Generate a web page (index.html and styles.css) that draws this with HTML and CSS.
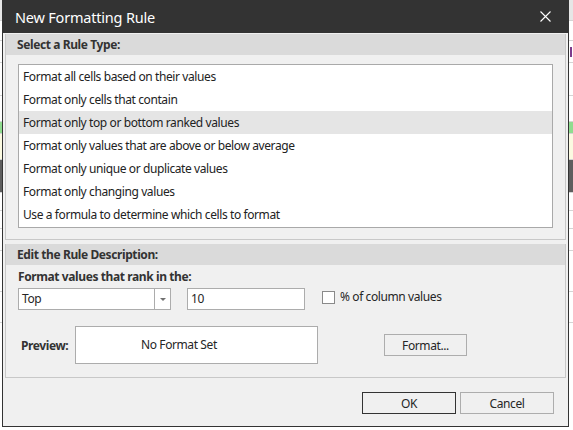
FILE: index.html
```html
<!DOCTYPE html>
<html lang="en">
<head>
    <meta charset="UTF-8">
    <title>New Formatting Rule</title>
    <link rel="stylesheet" href="styles.css">
</head>
<body>
<div class="desk">
    <div class="sheet">
        <div class="cell head" style="height:20px"></div>
        <div class="cell" style="height:19px"></div>
        <div class="cell" style="height:21px"></div>
        <div class="cell" style="height:32px"></div>
        <div class="cell" style="height:25px"></div>
        <div class="cell green" style="height:11px"></div>
        <div class="cell yellow" style="height:25px"></div>
        <div class="cell dark" style="height:32px"></div>
        <div class="cell" style="height:17px"></div>
        <div class="cell" style="height:17px"></div>
        <div class="cell" style="height:21px"></div>
        <div class="cell" style="height:40px"></div>
        <div class="cell" style="height:30px"></div>
    </div>

    <div class="dialog">
        <div class="titlebar">
            <span class="title">New Formatting Rule</span>
            <svg class="close" width="11" height="11" viewBox="0 0 11 11">
                <path d="M0.5 0.5 L10.5 10.5 M10.5 0.5 L0.5 10.5" stroke="#fff" stroke-width="1.1" fill="none"/>
            </svg>
        </div>

        <div class="section first">
            <div class="section-head">Select a Rule Type:</div>
            <div class="section-body">
                <ul class="listbox">
                    <li>Format all cells based on their values</li>
                    <li>Format only cells that contain</li>
                    <li class="sel">Format only top or bottom ranked values</li>
                    <li>Format only values that are above or below average</li>
                    <li>Format only unique or duplicate values</li>
                    <li>Format only changing values</li>
                    <li>Use a formula to determine which cells to format</li>
                </ul>
            </div>
        </div>

        <div class="section second">
            <div class="section-head">Edit the Rule Description:</div>
            <div class="section-body desc">
                <div class="rank-label">Format values that rank in the:</div>
                <div class="rank-row">
                    <div class="combo">
                        <span class="combo-text">Top</span>
                        <span class="combo-arrow"></span>
                    </div>
                    <div class="field">10</div>
                    <span class="check"></span>
                    <span class="check-label">% of column values</span>
                </div>
                <div class="preview-row">
                    <span class="preview-label">Preview:</span>
                    <div class="preview-box">No Format Set</div>
                    <button class="btn format-btn">Format...</button>
                </div>
            </div>
        </div>

        <div class="footer">
            <button class="btn default">OK</button>
            <button class="btn">Cancel</button>
        </div>
    </div>

    <div class="sheet right">
        <div class="cell head" style="height:20px"></div>
        <div class="cell" style="height:19px"></div>
        <div class="cell" style="height:21px"><span class="mark"></span></div>
        <div class="cell" style="height:32px"></div>
        <div class="cell" style="height:25px"></div>
        <div class="cell green" style="height:11px"></div>
        <div class="cell yellow" style="height:25px"></div>
        <div class="cell dark" style="height:32px"></div>
        <div class="cell" style="height:17px"></div>
        <div class="cell" style="height:17px"></div>
        <div class="cell" style="height:21px"></div>
        <div class="cell" style="height:40px"></div>
        <div class="cell" style="height:30px"></div>
    </div>
</div>
</body>
</html>
```

FILE: styles.css
```css
body {
    margin: 0;
    font-family: "Noto Sans", "Open Sans", sans-serif;
    font-size: 12px;
    letter-spacing: -0.4px;
    color: #262626;
    background: #fff;
}

.desk {
    display: flex;
    width: 573px;
    height: 430px;
    overflow: hidden;
}

/* spreadsheet peeking out behind the dialog */
.sheet {
    width: 2px;
    flex: none;
    display: flex;
    flex-direction: column;
    background: #fff;
}

.sheet.right {
    width: 4px;
}

.cell {
    flex: none;
    border-bottom: 1px solid #d4d4d4;
    background: #fff;
    position: relative;
}

.cell.head {
    background: #e6e6e6;
}

.cell.green {
    background: #8fdc8f;
}

.cell.yellow {
    background: #fbfae1;
}

.cell.dark {
    background: #5e5e5e;
}

.mark {
    position: absolute;
    left: 1px;
    top: 6px;
    width: 2px;
    height: 10px;
    background: #7d3c8c;
}

.dialog {
    width: 567px;
    height: 427px;
    flex: none;
    box-sizing: border-box;
    border: 1px solid #333;
    border-top: 0;
    background: #f0f0f0;
    display: flex;
    flex-direction: column;
}

.titlebar {
    height: 33px;
    flex: none;
    background: #333;
    color: #fff;
    display: flex;
    align-items: center;
    justify-content: space-between;
    padding: 0 17px 0 12px;
    font-size: 14.5px;
    letter-spacing: -0.2px;
}

.close {
    display: block;
}

.section {
    margin: 0 2px;
    border: 1px solid #c8c8c8;
    border-top: 0;
}

.section.first {
    margin-top: 1px;
}

.section.second {
    margin-top: 4px;
}

.section-head {
    height: 21px;
    line-height: 21px;
    background: #dadada;
    font-weight: bold;
    padding-left: 11px;
    color: #333;
}

.section-body {
    padding: 9px 12px 11px;
}

.listbox {
    list-style: none;
    margin: 0;
    padding: 0 0 1px;
    background: #fff;
    border: 1px solid #a9a9a9;
}

.listbox li {
    height: 23px;
    line-height: 23px;
    padding-left: 4px;
    color: #222;
}

.listbox li.sel {
    background: #e5e5e5;
}

.section-body.desc {
    padding: 0 12px 13px;
}

.rank-label {
    font-weight: bold;
    margin-top: 4px;
    line-height: 16px;
    color: #333;
}

.rank-row {
    display: flex;
    align-items: flex-start;
    margin-top: 3px;
    height: 22px;
}

.combo {
    width: 153px;
    height: 22px;
    box-sizing: border-box;
    border: 1px solid #acacac;
    background: #fff;
    display: flex;
}

.combo-text {
    flex: 1;
    line-height: 20px;
    padding-left: 3px;
}

.combo-arrow {
    width: 16px;
    box-sizing: border-box;
    border-left: 1px solid #acacac;
    display: flex;
    align-items: center;
    justify-content: center;
}

.combo-arrow::after {
    content: "";
    border-left: 3px solid transparent;
    border-right: 3px solid transparent;
    border-top: 3px solid #707070;
    margin-left: 1px;
}

.field {
    width: 118px;
    height: 22px;
    box-sizing: border-box;
    margin-left: 16px;
    border: 1px solid #acacac;
    background: #fff;
    line-height: 20px;
    padding-left: 3px;
}

.check {
    width: 13px;
    height: 13px;
    box-sizing: border-box;
    margin: 3px 0 0 17px;
    border: 1px solid #8a8a8a;
    background: #fff;
}

.check-label {
    margin-left: 5px;
    line-height: 18px;
}

.preview-row {
    display: flex;
    align-items: center;
    margin-top: 16px;
    height: 38px;
}

.preview-label {
    width: 57px;
    box-sizing: border-box;
    padding-left: 3px;
    font-weight: bold;
    color: #333;
}

.preview-box {
    width: 243px;
    height: 38px;
    box-sizing: border-box;
    border: 1px solid #acacac;
    background: #fff;
    line-height: 36px;
    padding-left: 65px;
}

.btn {
    font-family: inherit;
    font-size: 12px;
    letter-spacing: -0.4px;
    color: #262626;
    width: 94px;
    height: 22px;
    padding: 0;
    border: 1px solid #adadad;
    background: #f0f0f0;
}

.btn.default {
    border-color: #333;
}

.format-btn {
    width: 83px;
    margin-left: 66px;
}

.footer {
    display: flex;
    justify-content: flex-end;
    gap: 4px;
    margin-top: 14px;
    padding-right: 14px;
}
```
